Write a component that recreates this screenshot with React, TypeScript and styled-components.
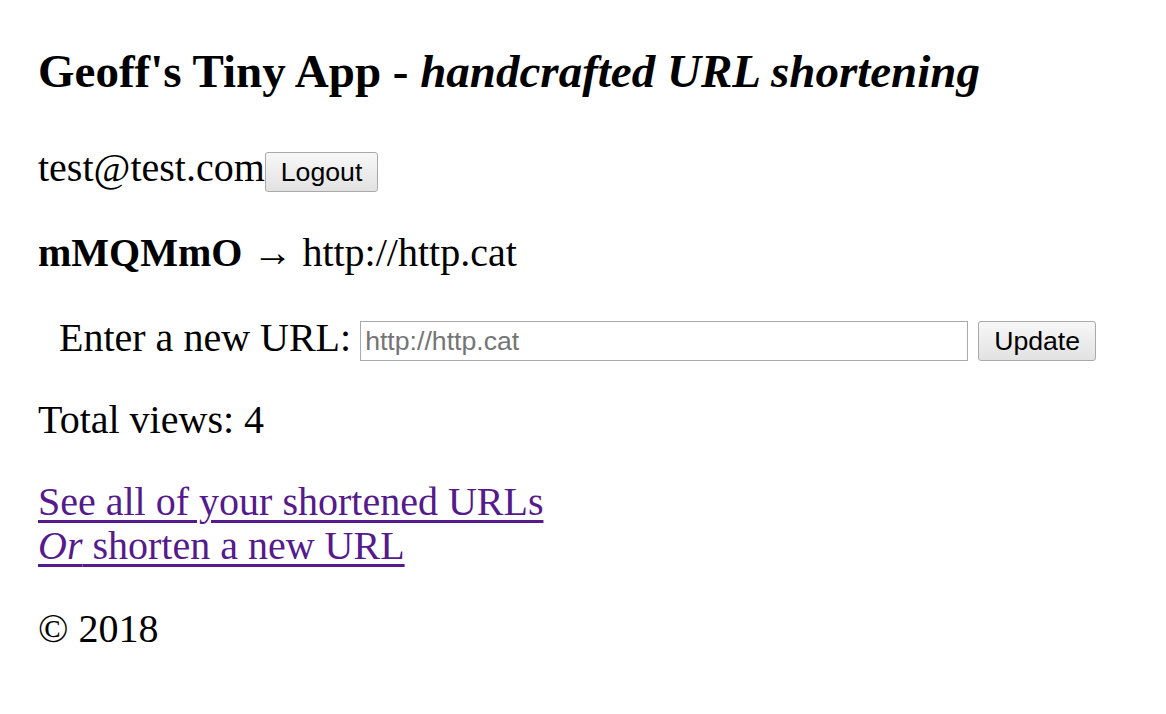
import React from "react";
import styled, { createGlobalStyle } from "styled-components";

const GlobalStyle = createGlobalStyle`
  html, body {
    margin: 0;
    padding: 0;
    background: #ffffff;
  }
  body {
    font-family: "Liberation Serif", "Times New Roman", serif;
    color: #000000;
  }
`;

const Page = styled.main`
  display: flex;
  flex-direction: column;
  padding: 44px 0 0 38px;
  font-family: "Liberation Serif", "Times New Roman", serif;
  font-size: 40px;
  line-height: 44px;
`;

const Title = styled.h1`
  margin: 0;
  font-size: 47px;
  line-height: 54px;
  font-weight: bold;
  white-space: nowrap;
`;

const Block = styled.div<{ $top: number }>`
  margin-top: ${(p) => p.$top}px;
`;

const InlineRow = styled.div<{ $top: number; $indent?: number }>`
  display: flex;
  align-items: baseline;
  margin-top: ${(p) => p.$top}px;
  padding-left: ${(p) => p.$indent ?? 0}px;
  white-space: nowrap;
`;

const FormRow = styled.form<{ $top: number; $indent: number }>`
  display: flex;
  align-items: center;
  height: 44px;
  margin: ${(p) => p.$top}px 0 0;
  padding-left: ${(p) => p.$indent}px;
  white-space: nowrap;
`;

const Label = styled.label`
  margin: 0 9px 6px 0;
`;

const Button = styled.button`
  box-sizing: border-box;
  height: 40px;
  padding: 0 15px;
  margin: 0;
  font-family: "Liberation Sans", Arial, sans-serif;
  font-size: 26.67px;
  line-height: 38px;
  color: #000000;
  background: linear-gradient(#f7f7f7, #e2e2e2);
  border: 1px solid #a9a9a9;
  border-radius: 3px;
  cursor: pointer;
`;

const UrlInput = styled.input`
  box-sizing: border-box;
  width: 608px;
  height: 40px;
  margin: 0 10px 0 0;
  padding: 0 4px;
  font-family: "Liberation Sans", Arial, sans-serif;
  font-size: 26.67px;
  color: #000000;
  background: #ffffff;
  border: 1px solid #a9a9a9;
  border-radius: 0;
  outline: none;
  &::placeholder {
    color: #757575;
    opacity: 1;
  }
`;

const Link = styled.a`
  color: #551a8b;
  text-decoration: underline;
  text-decoration-thickness: 3px;
  text-underline-offset: 5px;
`;

const Strong = styled.strong`
  font-weight: bold;
`;

export default function App() {
  return (
    <>
      <GlobalStyle />
      <Page>
        <Title>
          Geoff's Tiny App - <em>handcrafted URL shortening</em>
        </Title>
        <InlineRow $top={47.5}>
          <span>test@test.com</span>
          <Button type="button">Logout</Button>
        </InlineRow>
        <InlineRow $top={39}>
          <span>
            <Strong>mMQMmO</Strong> → http://http.cat
          </span>
        </InlineRow>
        <FormRow $top={44.5} $indent={21} onSubmit={(e) => e.preventDefault()}>
          <Label htmlFor="longURL">Enter a new URL:</Label>
          <UrlInput id="longURL" type="text" placeholder="http://http.cat" />
          <Button type="submit">Update</Button>
        </FormRow>
        <Block $top={34.5}>Total views: 4</Block>
        <Block $top={38.5}>
          <Link href="#urls">See all of your shortened URLs</Link>
          <br />
          <Link href="#new">
            <em>Or</em> shorten a new URL
          </Link>
        </Block>
        <Block $top={39}>© 2018</Block>
      </Page>
    </>
  );
}
